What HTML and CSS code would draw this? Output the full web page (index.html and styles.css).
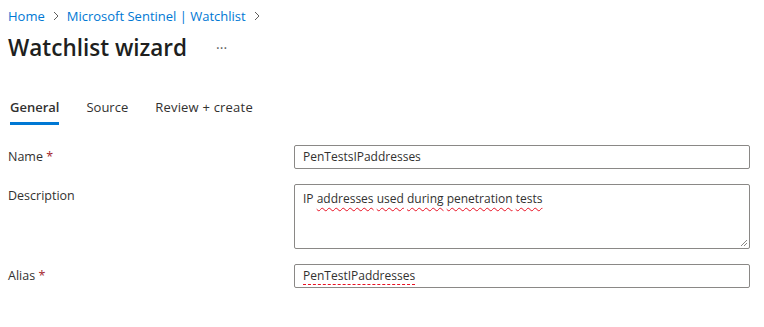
FILE: index.html
```html
<!DOCTYPE html>
<html lang="en">
<head>
    <meta charset="UTF-8" />
    <title>Watchlist wizard</title>
    <link rel="stylesheet" href="styles.css">
</head>
<body>
<div class="page">
    <nav class="breadcrumb">
        <a href="#">Home</a>
        <svg class="chev" width="8" height="12" viewBox="0 0 8 12"><path d="M2 2l4 4-4 4" fill="none" stroke="#605e5c" stroke-width="1"/></svg>
        <a href="#">Microsoft Sentinel | Watchlist</a>
        <svg class="chev" width="8" height="12" viewBox="0 0 8 12"><path d="M2 2l4 4-4 4" fill="none" stroke="#605e5c" stroke-width="1"/></svg>
    </nav>

    <div class="title-row">
        <h1>Watchlist wizard</h1>
        <span class="more">&middot;&middot;&middot;</span>
    </div>

    <div class="tabs">
        <a class="tab active" href="#">General</a>
        <a class="tab" href="#">Source</a>
        <a class="tab" href="#">Review + create</a>
    </div>

    <form class="form">
        <div class="row">
            <label>Name <span class="req">*</span></label>
            <div class="field">PenTestsIPaddresses</div>
        </div>
        <div class="row">
            <label>Description</label>
            <div class="field area">IP <span class="typo">addresses</span> <span class="typo">used</span> <span class="typo">during</span> <span class="typo">penetration</span> <span class="typo">tests</span>
                <svg class="grip" width="9" height="9" viewBox="0 0 9 9"><path d="M8 2L2 8M8 5L5 8" stroke="#8a8886" stroke-width="1"/></svg>
            </div>
        </div>
        <div class="row">
            <label>Alias <span class="req">*</span></label>
            <div class="field"><span class="typo dots">PenTestIPaddresses</span></div>
        </div>
    </form>
</div>
</body>
</html>
```

FILE: styles.css
```css
* {
    box-sizing: border-box;
    margin: 0;
    padding: 0;
}

body {
    font-family: 'Open Sans', 'Noto Sans', sans-serif;
    background: #fff;
    color: #323130;
}

.page {
    padding: 5px 8px 0 8px;
}

.breadcrumb {
    display: flex;
    align-items: center;
    gap: 7px;
    font-size: 13px;
    height: 22px;
}

.breadcrumb a {
    color: #0078d4;
    text-decoration: none;
}

.chev {
    display: block;
}

.title-row {
    display: flex;
    align-items: center;
    margin-top: 2px;
    height: 36px;
}

h1 {
    font-size: 22.5px;
    font-weight: 600;
    color: #201f1e;
}

.more {
    margin-left: 29px;
    font-size: 14px;
    color: #605e5c;
}

.tabs {
    display: flex;
    gap: 27px;
    margin-top: 33px;
    padding-left: 2px;
}

.tab {
    font-size: 13px;
    color: #323130;
    text-decoration: none;
    padding-bottom: 6px;
    border-bottom: 3px solid transparent;
}

.tab:last-child {
    letter-spacing: 0.2px;
}

.tab.active {
    font-weight: 600;
    border-bottom-color: #0078d4;
}

.form {
    margin-top: 20px;
    display: flex;
    flex-direction: column;
    gap: 15px;
}

.row {
    display: flex;
}

.row label {
    width: 286px;
    font-size: 12.5px;
    padding-top: 3px;
}

.req {
    color: #a4262c;
}

.field {
    position: relative;
    width: 456px;
    height: 24px;
    border: 1px solid #8a8886;
    border-radius: 2px;
    font-size: 12px;
    line-height: 20px;
    padding: 1px 8px;
    color: #323130;
}

.field.area {
    height: 65px;
    padding-top: 4px;
}

.typo {
    text-decoration: underline wavy #e81123;
    text-decoration-thickness: 1px;
    text-underline-offset: 4px;
}

.typo.dots {
    text-decoration-style: dashed;
}

.grip {
    position: absolute;
    right: 1px;
    bottom: 1px;
}
```
